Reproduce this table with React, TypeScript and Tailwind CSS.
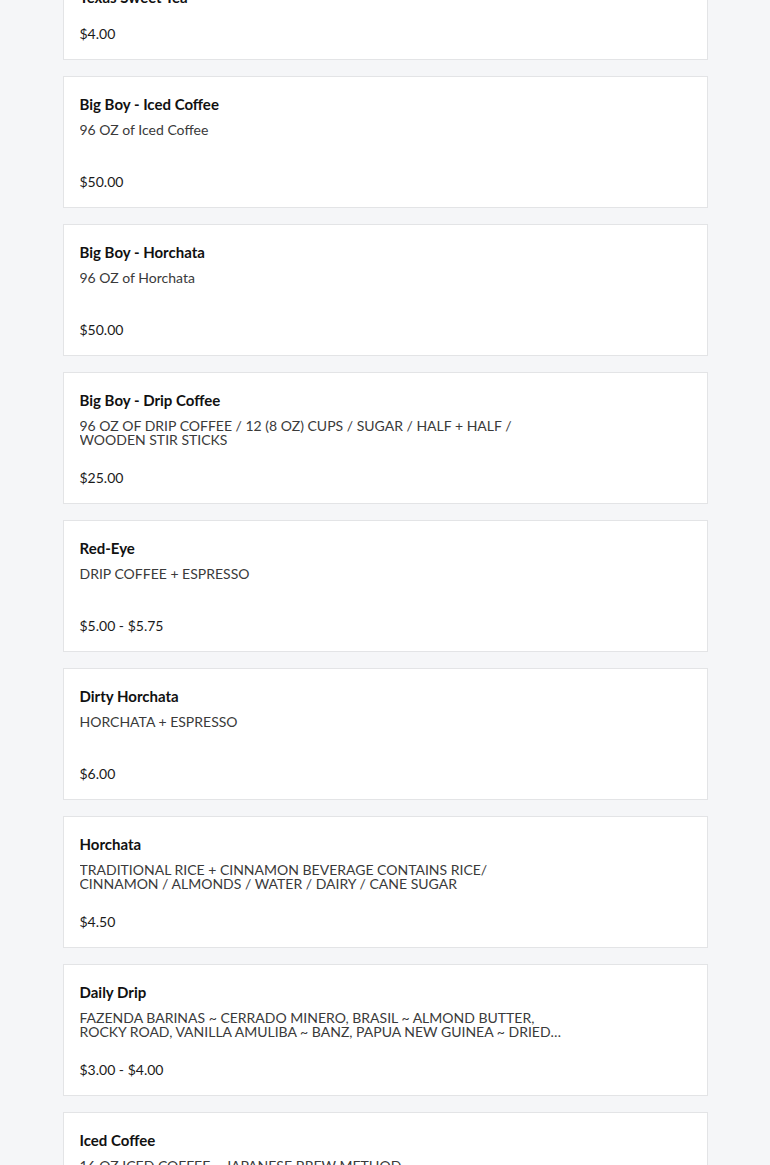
import React from 'react';

interface MenuItem {
  name: string;
  description?: string;
  price: string;
}

const items: MenuItem[] = [
  { name: 'Big Boy - Iced Coffee', description: '96 OZ of Iced Coffee', price: '$50.00' },
  { name: 'Big Boy - Horchata', description: '96 OZ of Horchata', price: '$50.00' },
  {
    name: 'Big Boy - Drip Coffee',
    description: '96 OZ OF DRIP COFFEE / 12 (8 OZ) CUPS / SUGAR / HALF + HALF / WOODEN STIR STICKS',
    price: '$25.00',
  },
  { name: 'Red-Eye', description: 'DRIP COFFEE + ESPRESSO', price: '$5.00 - $5.75' },
  { name: 'Dirty Horchata', description: 'HORCHATA + ESPRESSO', price: '$6.00' },
  {
    name: 'Horchata',
    description: 'TRADITIONAL RICE + CINNAMON BEVERAGE CONTAINS RICE/ CINNAMON / ALMONDS / WATER / DAIRY / CANE SUGAR',
    price: '$4.50',
  },
  {
    name: 'Daily Drip',
    description:
      'FAZENDA BARINAS ~ CERRADO MINERO, BRASIL ~ ALMOND BUTTER, ROCKY ROAD, VANILLA AMULIBA ~ BANZ, PAPUA NEW GUINEA ~ DRIED APRICOT, CACAO NIB, BROWN SUGAR',
    price: '$3.00 - $4.00',
  },
  { name: 'Iced Coffee', description: '16 OZ ICED COFFEE ~ JAPANESE BREW METHOD', price: '$4.50' },
];

const MenuCard: React.FC<{ item: MenuItem }> = ({ item }) => (
  <div className="border border-[#e3e4e6] bg-white px-4 pt-[17px] pb-[15px]">
    <h3 className="text-[15px] leading-5 font-bold text-[#111]">{item.name}</h3>
    <p className="mt-[9px] h-[28px] max-w-[482px] overflow-hidden text-[14px] leading-[14px] text-[#3a3a3a] line-clamp-2">
      {item.description}
    </p>
    <p className="mt-[21px] text-[14px] leading-5 text-[#1a1a1a]">{item.price}</p>
  </div>
);

export default function App() {
  return (
    <div
      className="min-h-screen bg-[#f5f6f8] overflow-hidden"
      style={{ fontFamily: 'Lato, "Noto Sans", sans-serif' }}
    >
      <div className="mx-auto -mt-[30px] flex w-[645px] flex-col gap-4">
        <div className="border border-[#e3e4e6] bg-white px-4 pt-4 pb-[15px]">
          <h3 className="text-[15px] leading-5 font-bold text-[#111]">Texas Sweet Tea</h3>
          <p className="mt-[17px] text-[14px] leading-5 text-[#1a1a1a]">$4.00</p>
        </div>
        {items.map((item) => (
          <MenuCard key={item.name} item={item} />
        ))}
      </div>
    </div>
  );
}
